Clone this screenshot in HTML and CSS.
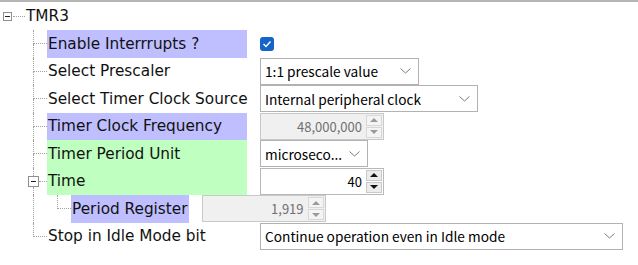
FILE: index.html
```html
<!DOCTYPE html>
<html lang="en">
<head>
  <meta charset="UTF-8">
  <title>TMR3 configuration</title>
  <link rel="stylesheet" href="styles.css">
</head>
<body>

  <div class="panel">
    <div class="tree-root">
      <span class="toggle"></span>
      <span class="stub"></span>
      <span class="root-name">TMR3</span>
    </div>

    <div class="row">
      <span class="branch"></span>
      <span class="label blue">Enable Interrrupts ?</span>
      <span class="ctrl">
        <span class="check">
          <svg width="10" height="8" viewBox="0 0 10 8"><polyline points="1.5,4 4,6.5 8.5,1.5" fill="none" stroke="#fff" stroke-width="1.4"/></svg>
        </span>
      </span>
    </div>

    <div class="row">
      <span class="branch"></span>
      <span class="label">Select Prescaler</span>
      <span class="ctrl">
        <span class="select w-prescale">
          <span class="select-text">1:1 prescale value</span>
          <svg class="chev" width="11" height="6" viewBox="0 0 11 6"><polyline points="0.5,0.5 5.5,5 10.5,0.5" fill="none" stroke="#7a7a7a"/></svg>
        </span>
      </span>
    </div>

    <div class="row">
      <span class="branch"></span>
      <span class="label">Select Timer Clock Source</span>
      <span class="ctrl">
        <span class="select w-clock">
          <span class="select-text">Internal peripheral clock</span>
          <svg class="chev" width="11" height="6" viewBox="0 0 11 6"><polyline points="0.5,0.5 5.5,5 10.5,0.5" fill="none" stroke="#7a7a7a"/></svg>
        </span>
      </span>
    </div>

    <div class="row">
      <span class="branch"></span>
      <span class="label blue">Timer Clock Frequency</span>
      <span class="ctrl">
        <span class="spin disabled">
          <span class="spin-value">48,000,000</span>
          <span class="spin-btns">
            <span class="spin-btn"><span class="arrow-up"></span></span>
            <span class="spin-btn"><span class="arrow-down"></span></span>
          </span>
        </span>
      </span>
    </div>

    <div class="row">
      <span class="branch"></span>
      <span class="label green">Timer Period Unit</span>
      <span class="ctrl">
        <span class="select w-unit">
          <span class="select-text">microseco...</span>
          <svg class="chev" width="11" height="6" viewBox="0 0 11 6"><polyline points="0.5,0.5 5.5,5 10.5,0.5" fill="none" stroke="#7a7a7a"/></svg>
        </span>
      </span>
    </div>

    <div class="row">
      <span class="branch toggle-branch">
        <span class="toggle-mid"><span class="toggle big"></span><span class="toggle-line"></span></span>
      </span>
      <span class="label green">Time</span>
      <span class="ctrl">
        <span class="spin">
          <span class="spin-value">40</span>
          <span class="spin-btns">
            <span class="spin-btn"><span class="arrow-up"></span></span>
            <span class="spin-btn"><span class="arrow-down"></span></span>
          </span>
        </span>
      </span>
    </div>

    <div class="row">
      <span class="pass"></span>
      <span class="branch last"></span>
      <span class="label blue auto">Period Register</span>
      <span class="ctrl">
        <span class="spin disabled">
          <span class="spin-value">1,919</span>
          <span class="spin-btns">
            <span class="spin-btn"><span class="arrow-up"></span></span>
            <span class="spin-btn"><span class="arrow-down"></span></span>
          </span>
        </span>
      </span>
    </div>

    <div class="row">
      <span class="branch last"></span>
      <span class="label">Stop in Idle Mode bit</span>
      <span class="ctrl">
        <span class="select w-stop">
          <span class="select-text">Continue operation even in Idle mode</span>
          <svg class="chev" width="11" height="6" viewBox="0 0 11 6"><polyline points="0.5,0.5 5.5,5 10.5,0.5" fill="none" stroke="#7a7a7a"/></svg>
        </span>
      </span>
    </div>
  </div>

</body>
</html>
```

FILE: styles.css
```css
:root {
  --line: #a0a0a0;
  --blue: #bfbfff;
  --green: #bfffbf;
  --text: #111;
}

* {
  box-sizing: border-box;
  margin: 0;
  padding: 0;
}

body {
  background: #fff;
  color: var(--text);
  font-family: 'DejaVu Sans', sans-serif;
  font-size: 15.3px;
}

.panel {
  width: 638px;
  height: 265px;
  border-top: 2px solid #b4b4b4;
}

/* root node */
.tree-root {
  display: flex;
  align-items: center;
  height: 28px;
  padding-left: 3px;
}

.toggle {
  display: flex;
  align-items: center;
  justify-content: center;
  width: 9px;
  height: 9px;
  border: 1px solid #8f8f8f;
  background: #fff;
  flex: none;
}

.toggle::before {
  content: '';
  width: 5px;
  height: 1px;
  background: #222;
}

.toggle.big {
  width: 11px;
  height: 11px;
}

.stub {
  width: 12px;
  border-top: 1px dotted var(--line);
  margin-left: 1px;
}

.root-name {
  margin-left: 1px;
}

/* child rows */
.row {
  display: flex;
  align-items: center;
  height: 27.5px;
  padding-left: 33px;
}

.branch {
  display: flex;
  flex-direction: column;
  width: 14px;
  height: 100%;
  flex: none;
}

.branch::before {
  content: '';
  flex: 1;
  border-left: 1px dotted var(--line);
  border-bottom: 1px dotted var(--line);
}

.branch::after {
  content: '';
  flex: 1;
  border-left: 1px dotted var(--line);
}

.branch.last::after {
  border-left: none;
}

.toggle-branch::before {
  border-bottom: none;
}

.toggle-mid {
  display: flex;
  align-items: center;
  margin-left: -5px;
}

.toggle-line {
  flex: 1;
  border-top: 1px dotted var(--line);
}

.pass {
  width: 24px;
  height: 100%;
  border-left: 1px dotted var(--line);
  flex: none;
}

.label {
  display: flex;
  align-items: center;
  width: 200px;
  height: 100%;
  padding-left: 1px;
  white-space: nowrap;
  flex: none;
}

.label.auto {
  width: auto;
  padding-right: 1px;
}

.blue {
  background: var(--blue);
}

.green {
  background: var(--green);
}

.ctrl {
  display: flex;
  align-items: center;
  margin-left: 13px;
  font-family: 'Noto Sans CJK JP', sans-serif;
  font-size: 13.7px;
  color: #000;
}

/* checkbox */
.check {
  display: flex;
  align-items: center;
  justify-content: center;
  width: 14px;
  height: 14px;
  border-radius: 3px;
  background: #1565c8;
}

/* dropdowns */
.select {
  display: flex;
  align-items: center;
  justify-content: space-between;
  height: 27px;
  padding: 0 7px 0 4px;
  border: 1px solid #b2b2b2;
  background: #fff;
}

.select-text {
  white-space: nowrap;
}

.chev {
  flex: none;
}

.w-prescale { width: 159px; }
.w-clock { width: 218px; }
.w-unit { width: 108px; }
.w-stop { width: 363px; }

/* number spinners */
.spin {
  display: flex;
  width: 124px;
  height: 27px;
  border: 1px solid #b8b8b8;
  background: #fff;
}

.spin-value {
  flex: 1;
  display: flex;
  align-items: center;
  justify-content: flex-end;
  padding-right: 3px;
  font-size: 13px;
  color: #000;
}

.spin-btns {
  display: flex;
  flex-direction: column;
  width: 18px;
  padding: 1px;
  gap: 1px;
}

.spin-btn {
  flex: 1;
  display: flex;
  align-items: center;
  justify-content: center;
  background: #ececec;
  border: 1px solid #c9c9c9;
}

.arrow-up, .arrow-down {
  width: 0;
  height: 0;
  border-left: 4px solid transparent;
  border-right: 4px solid transparent;
}

.arrow-up {
  border-bottom: 4px solid #111;
}

.arrow-down {
  border-top: 4px solid #111;
}

.spin.disabled {
  background: #f0f0f0;
  border-color: #c8c8c8;
}

.spin.disabled .spin-value {
  color: #707070;
}

.spin.disabled .spin-btn {
  background: #f4f4f4;
  border-color: #d8d8d8;
}

.spin.disabled .arrow-up {
  border-bottom-color: #9a9a9a;
}

.spin.disabled .arrow-down {
  border-top-color: #9a9a9a;
}
```
